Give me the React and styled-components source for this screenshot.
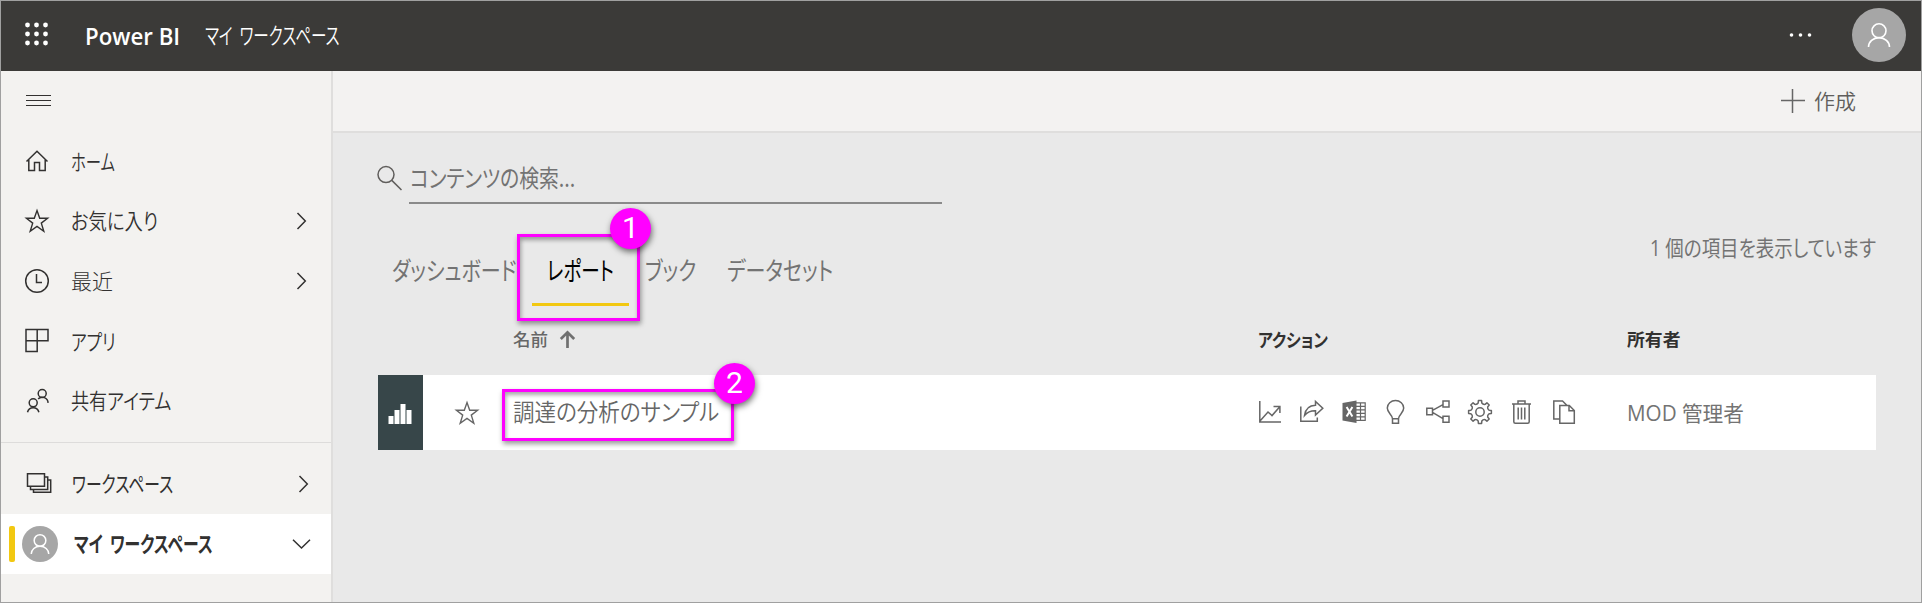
import React, { useLayoutEffect, useRef, useState } from "react";
import styled, { createGlobalStyle } from "styled-components";

const GlobalStyle = createGlobalStyle`
  *, *::before, *::after { box-sizing: border-box; }
  body { margin: 0; font-family: "Open Sans", "Noto Sans CJK JP", sans-serif; color: #323130; }
  svg { display: block; flex: none; overflow: visible; }
`;

/* ---------- condensed text ---------- */

const TextBox = styled.span`
  display: block;
  flex: none;
  width: ${(p) => p.$width}px;
  height: 30px;
  line-height: ${(p) => p.$line || 28}px;
  font-size: ${(p) => p.$size}px;
  font-weight: ${(p) => p.$weight || 400};
  font-family: ${(p) => p.$family || `"Noto Sans CJK JP", sans-serif`};
  color: ${(p) => p.$color || "#323130"};
  font-feature-settings: "palt";
  word-spacing: ${(p) => p.$word || 0}px;
  white-space: nowrap;
`;

const TextInk = styled.span`
  display: inline-block;
  transform-origin: 0 50%;
`;

function FitText({ width, size, weight, color, family, word, line, children }) {
  const ref = useRef(null);
  const [scale, setScale] = useState(1);
  useLayoutEffect(() => {
    const fit = () => setScale(width / ref.current.offsetWidth);
    fit();
    document.fonts?.ready.then(() => ref.current && fit());
  }, [width]);
  return (
    <TextBox $width={width} $size={size} $weight={weight} $color={color} $family={family} $word={word} $line={line}>
      <TextInk ref={ref} style={{ transform: `scaleX(${scale})` }}>{children}</TextInk>
    </TextBox>
  );
}

const latinFirst = `"Open Sans", "Noto Sans CJK JP", sans-serif`;

/* ---------- icons ---------- */

const Icon = styled.svg.attrs((p) => ({
  width: p.$w || 24,
  height: p.$h || 24,
  viewBox: `0 0 ${p.$w || 24} ${p.$h || 24}`,
}))`
  fill: none;
  stroke: ${(p) => p.$color || "#323130"};
  stroke-width: ${(p) => p.$stroke || 1.5};
`;

const Waffle = () => (
  <Icon $color="none">
    {[2, 11, 20].map((y) => [3, 12, 21].map((x) => (
      <circle key={`${x}-${y}`} cx={x - 0.5} cy={y} r="2.4" fill="#fff" />
    )))}
  </Icon>
);
const Ellipsis = () => (
  <Icon $color="none" $w={24} $h={6}>
    {[3, 12, 21].map((x) => <circle key={x} cx={x - 0.5} cy="3" r="1.8" fill="#fff" />)}
  </Icon>
);
const Hamburger = () => (
  <Icon $w={25} $h={12} $stroke={1}><path d="M0 .5h25M0 5.5h25M0 10.5h25" /></Icon>
);
const Home = () => (
  <Icon><path d="M1.5 12.5L12 2.2l10.5 10.3M3.8 10.5v11h5.7v-8h5v8h5.7v-11" /></Icon>
);
const Star = ({ color }) => (
  <Icon $color={color} $stroke={1.4}>
    <path d="M12 1.5l2.7 7.7h7.9l-6.3 4.9 2.5 8.2-6.8-4.9-6.8 4.9 2.5-8.2-6.3-4.9h7.9z" />
  </Icon>
);
const Clock = () => (
  <Icon $w={25}><circle cx="12" cy="12" r="11.3" /><path d="M11.5 5v8.5H17" /></Icon>
);
const Apps = () => (
  <Icon><path d="M1 .5h22v11.2H12.2v10.8H1zM12.2 .5v11.2H1" /></Icon>
);
const Shared = () => (
  <Icon>
    <circle cx="17.2" cy="4.5" r="4" /><circle cx="8.2" cy="13.8" r="4" />
    <path d="M2.5 23.2a5.9 5.9 0 0 1 11.4 0M13.1 9.9a5.9 5.9 0 0 1 10 4" />
  </Icon>
);
const Workspaces = () => (
  <Icon $w={26} $h={22}>
    <path d="M1.5 .8h17v12.4h-17zM18.7 4h3v12.4H4.5v-3M21.7 7h3v12.2H7.5v-3" />
  </Icon>
);
const ChevronRight = () => <Icon $w={10} $h={18}><path d="M.5 1l7.8 8L.5 17" /></Icon>;
const ChevronDown = () => <Icon $w={18} $h={10}><path d="M0 .8L8.5 9 17 .8" /></Icon>;
const Plus = () => <Icon $w={24} $color="#666"><path d="M11.5 0v24M0 11.5h24" /></Icon>;
const Search = () => (
  <Icon $w={25} $color="#605e5c"><circle cx="9" cy="8.6" r="8" /><path d="M14.8 14.4L24.5 24" /></Icon>
);
const SortUp = () => (
  <Icon $w={16} $h={18} $color="#707070" $stroke={2.7}><path d="M7.5 18V2.5M.8 9l6.7-6.7L14.2 9" /></Icon>
);
const Bars = () => (
  <Icon $h={20} $color="none">
    <path fill="#fff" d="M-.5 12h5v8h-5zM5.5 6h5v14h-5zM11.5 0h5v20h-5zM17.5 6h5v14h-5z" />
  </Icon>
);

const ink = "#666";
const Analyze = () => (
  <Icon $color={ink}><path d="M1.8 1v21H23M2 21l8-9 4 3.6 8-9M15.5 6.5h6.4v6.6" /></Icon>
);
const Share = () => (
  <Icon $color={ink}>
    <path d="M.8 6.5v14.7h16.5v-3.7M4.5 15.5C5.5 8.5 9.5 5.5 15.5 5.3V1.4l7.3 6.8-7.3 6.9v-4.3c-4.8-.2-8 1.3-11 4.7z" />
  </Icon>
);
const Excel = () => (
  <Icon $color={ink} $stroke={1.2}>
    <path d="M14 2.8h9.2v17.5H14M14 6.3h9M14 9.8h9M14 13.3h9M14 16.8h9M18.5 3v17" />
    <path fill={ink} stroke="none" d="M.5 3L14.5.5v22.6L.5 20.5z" />
    <path stroke="#fff" strokeWidth="2" d="M4.6 7l5.8 9.6M10.4 7l-5.8 9.6" />
  </Icon>
);
const Bulb = () => (
  <Icon $color={ink}>
    <path d="M8.5 18.7c0-4.2-5.2-5.6-5.2-10.6a8.2 7.5 0 0 1 16.4 0c0 5-5.2 6.4-5.2 10.6zM8.5 18.7v4.5h6v-4.5" />
  </Icon>
);
const Related = () => (
  <Icon $color={ink}>
    <path d="M.8 8.2h5.7v6.5H.8zM17 1h6v6h-6zM17 16.3h6v6h-6zM6.5 10.4L17 4.7M6.5 12.4L17 18.6" />
  </Icon>
);
const gearPath = (() => {
  const polar = (a, r) => `${(12 + r * Math.sin(a)).toFixed(2)} ${(12 - r * Math.cos(a)).toFixed(2)}`;
  let d = "";
  for (let i = 0; i < 8; i += 1) {
    const base = (i * Math.PI) / 4;
    d += `${i ? "L" : "M"}${polar(base - 0.2, 9.2)}L${polar(base - 0.14, 11.5)}L${polar(base + 0.14, 11.5)}`;
    d += `L${polar(base + 0.2, 9.2)}Q${polar(base + 0.3927, 7.9)} ${polar(base + 0.5854, 9.2)}`;
  }
  return `${d}Z`;
})();
const Gear = () => (
  <Icon $color={ink}><path strokeLinejoin="round" d={gearPath} /><circle cx="12" cy="12" r="4.2" /></Icon>
);
const Trash = () => (
  <Icon $color={ink}>
    <path d="M2 4h19M8 4V1h7v3M3.8 4v17.7q0 1.5 1.5 1.5h12.4q1.5 0 1.5-1.5V4M8.2 7.5v12M11.5 7.5v12M14.8 7.5v12" />
  </Icon>
);
const Copy = () => (
  <Icon $color={ink}>
    <path d="M7.5 19H1.8V1h8.7l4.3 4.3M7.8 5.5h9.5l5 5v12.7H7.8zM17 5.5v5.3h5.3" />
  </Icon>
);

/* ---------- shell ---------- */

const Page = styled.div`
  width: 1922px;
  height: 603px;
  display: flex;
  flex-direction: column;
  border: 1px solid #a0a0a0;
  background: #e9e9e9;
  overflow: hidden;
`;

const Header = styled.header`
  flex: none;
  height: 70px;
  display: flex;
  align-items: center;
  background: #3b3a38;
  padding: 0 15px 2px 24px;
`;
const Brand = styled.div`
  margin-left: 36px;
  margin-right: 25px;
  flex: none;
`;
const HeaderRight = styled.div`
  margin-left: auto;
  display: flex;
  align-items: center;
  gap: 39px;
`;

const AvatarDisc = styled.div`
  flex: none;
  width: ${(p) => p.$size}px;
  height: ${(p) => p.$size}px;
  border-radius: 50%;
  background: #a6a6a6;
  display: grid;
  place-items: center;
`;
const Avatar = ({ size, glyph }) => (
  <AvatarDisc $size={size}>
    <svg width={glyph} height={glyph} viewBox="0 0 24 24" fill="none" stroke="#fff" strokeWidth={glyph > 22 ? 1.6 : 1.8}>
      <circle cx="12" cy="7.8" r="7" />
      <path d="M1.5 24a10.5 9.4 0 0 1 21 0" />
    </svg>
  </AvatarDisc>
);

const Body = styled.div`
  flex: 1;
  display: flex;
  min-height: 0;
`;

const Sidebar = styled.nav`
  flex: none;
  width: 332px;
  background: #f3f2f0;
  border-right: 2px solid #dfdedd;
`;
const MenuToggle = styled.div`
  height: 60px;
  display: flex;
  align-items: center;
  padding-left: 25px;
`;
const NavRow = styled.div`
  height: 60px;
  display: flex;
  align-items: center;
  padding-left: ${(p) => p.$indent || 24}px;
  padding-right: ${(p) => p.$end || 24}px;
  background: ${(p) => (p.$active ? "#fff" : "transparent")};
`;
const NavIcon = styled.div`
  width: 46px;
  flex: none;
`;
const RowEnd = styled.div`
  margin-left: auto;
`;
const NavDivider = styled.hr`
  margin: 11px 0;
  border: 0;
  height: 1px;
  background: #dddcdb;
`;
const ActiveMark = styled.div`
  width: 6px;
  height: 36px;
  margin-right: 7px;
  border-radius: 2px;
  background: #f2c811;
`;
const AvatarSlot = styled.div`
  margin-right: 16px;
`;

const Main = styled.main`
  flex: 1;
  min-width: 0;
`;
const ActionBar = styled.div`
  height: 62px;
  display: flex;
  justify-content: flex-end;
  align-items: center;
  gap: 9px;
  padding-right: 65px;
  background: #f3f2f1;
  border-bottom: 2px solid #dfdedd;
`;
const Content = styled.section`
  padding: 21px 45px 0;
`;

const SearchRow = styled.div`
  display: flex;
  align-items: flex-start;
  gap: 7px;
  height: 50px;
`;
const SearchIcon = styled.div`
  padding-top: 12px;
  margin-left: -1px;
`;
const SearchField = styled.div`
  width: 533px;
  height: 50px;
  padding: 9px 0 0 1px;
  border-bottom: 2px solid #8a8a8a;
`;

const TabsRow = styled.div`
  display: flex;
  margin-top: 30px;
  height: 85px;
`;
const TabList = styled.div`
  display: flex;
  padding-left: 14px;
`;
const Tab = styled.div`
  position: relative;
  height: 72px;
  padding-top: 21px;
  margin-left: ${(p) => p.$gap || 0}px;
`;
const ActiveTab = styled(Tab)`
  width: 97px;
  padding-left: 15px;
  border-bottom: 3px solid #f2c811;
`;
const Count = styled.div`
  margin-left: auto;
`;

const columns = "135px 745px 369px 1fr";
const TableHead = styled.div`
  display: grid;
  grid-template-columns: ${columns};
  align-items: center;
  height: 40px;
`;
const HeadCell = styled.div`
  display: flex;
  align-items: center;
  gap: 12px;
`;
const TableRow = styled.div`
  display: grid;
  grid-template-columns: ${columns};
  align-items: center;
  height: 75px;
  margin-top: 16px;
  background: #fff;
`;
const RowLead = styled.div`
  display: flex;
  align-items: center;
  height: 100%;
  gap: 32px;
`;
const TypeTile = styled.div`
  width: 45px;
  height: 75px;
  display: grid;
  place-items: center;
  background: #374649;
  padding-top: 3px;
`;
const NameCell = styled.div`
  position: relative;
`;
const Actions = styled.div`
  display: flex;
  gap: 18px;
  padding-bottom: 2px;
`;

/* ---------- callouts ---------- */

const Callout = styled.div`
  position: absolute;
  left: ${(p) => p.$x}px;
  top: ${(p) => p.$y}px;
  width: ${(p) => p.$w}px;
  height: ${(p) => p.$h}px;
  border: 3px solid #ff00ff;
  box-shadow: 1px 3px 5px rgba(0, 0, 0, 0.4), inset 1px 3px 4px rgba(0, 0, 0, 0.35);
  z-index: 1;
`;
const Badge = styled.div`
  position: absolute;
  right: ${(p) => p.$right}px;
  top: -29px;
  width: 41px;
  height: 41px;
  border-radius: 50%;
  background: #ff00ff;
  box-shadow: 1px 3px 6px rgba(0, 0, 0, 0.55);
  color: #fff;
  font: 30px/40px Roboto, sans-serif;
  text-align: center;
`;

const navItems = [
  { label: "ホーム", width: 44, size: 22, icon: <Home /> },
  { label: "お気に入り", width: 87, size: 21.5, icon: <Star />, more: true },
  { label: "最近", width: 42, size: 21, icon: <Clock />, weight: 300, more: true },
  { label: "アプリ", width: 45, size: 22, icon: <Apps /> },
  { label: "共有アイテム", width: 100, size: 21.5, icon: <Shared /> },
];

export default function App() {
  return (
    <>
      <GlobalStyle />
      <Page>
        <Header>
          <Waffle />
          <Brand>
            <FitText width={95} size={22.5} weight={600} line={33} color="#fff" family={`"Open Sans", sans-serif`}>Power BI</FitText>
          </Brand>
          <FitText width={135} size={22.5} word={5} line={29} color="#fff" weight={350}>マイ ワークスペース</FitText>
          <HeaderRight>
            <Ellipsis />
            <Avatar size={54} glyph={24} />
          </HeaderRight>
        </Header>
        <Body>
          <Sidebar>
            <MenuToggle><Hamburger /></MenuToggle>
            {navItems.map((item) => (
              <NavRow key={item.label}>
                <NavIcon>{item.icon}</NavIcon>
                <FitText width={item.width} size={item.size} weight={item.weight || 350}>{item.label}</FitText>
                {item.more && <RowEnd><ChevronRight /></RowEnd>}
              </NavRow>
            ))}
            <NavDivider />
            <NavRow $indent={25} $end={22}>
              <NavIcon><Workspaces /></NavIcon>
              <FitText width={101} size={22} line={26} weight={400}>ワークスペース</FitText>
              <RowEnd><ChevronRight /></RowEnd>
            </NavRow>
            <NavRow $active $indent={8} $end={20}>
              <ActiveMark />
              <AvatarSlot><Avatar size={36} glyph={20} /></AvatarSlot>
              <FitText width={139} size={22} word={5} line={26} weight={600}>マイ ワークスペース</FitText>
              <RowEnd><ChevronDown /></RowEnd>
            </NavRow>
          </Sidebar>
          <Main>
            <ActionBar>
              <Plus />
              <FitText width={42} size={21} weight={350} color="#605e5c">作成</FitText>
            </ActionBar>
            <Content>
              <SearchRow>
                <SearchIcon><Search /></SearchIcon>
                <SearchField>
                  <FitText width={165} size={24} line={27} color="#737373">コンテンツの検索...</FitText>
                </SearchField>
              </SearchRow>
              <TabsRow>
                <TabList>
                  <Tab><FitText width={124} size={25.5} line={27} color="#737373">ダッシュボード</FitText></Tab>
                  <ActiveTab $gap={16}>
                    <FitText width={67} size={25.5} line={27} color="#000">レポート</FitText>
                    <Callout $x={-15} $y={0} $w={123} $h={87}><Badge $right={-14}>1</Badge></Callout>
                  </ActiveTab>
                  <Tab $gap={16}><FitText width={51} size={25.5} line={27} color="#737373">ブック</FitText></Tab>
                  <Tab $gap={31}><FitText width={106} size={25.5} line={27} color="#737373">データセット</FitText></Tab>
                </TabList>
                <Count><FitText width={226} size={21.5} line={28} color="#737373" family={latinFirst}>1 個の項目を表示しています</FitText></Count>
              </TabsRow>
              <TableHead>
                <span />
                <HeadCell>
                  <FitText width={35} size={17.5} line={30} weight={500} color="#666">名前</FitText>
                  <SortUp />
                </HeadCell>
                <FitText width={70} size={18.5} line={30} weight={600}>アクション</FitText>
                <FitText width={54} size={17.5} line={30} weight={600}>所有者</FitText>
              </TableHead>
              <TableRow>
                <RowLead>
                  <TypeTile><Bars /></TypeTile>
                  <Star color="#666" />
                </RowLead>
                <NameCell>
                  <FitText width={206} size={23.5} line={27} weight={350} color="#666">調達の分析のサンプル</FitText>
                  <Callout $x={-11} $y={-9} $w={232} $h={52}><Badge $right={-24}>2</Badge></Callout>
                </NameCell>
                <Actions>
                  <Analyze /><Share /><Excel /><Bulb /><Related /><Gear /><Trash /><Copy />
                </Actions>
                <FitText width={117} size={21} line={31} color="#737373" family={latinFirst}>MOD 管理者</FitText>
              </TableRow>
            </Content>
          </Main>
        </Body>
      </Page>
    </>
  );
}
